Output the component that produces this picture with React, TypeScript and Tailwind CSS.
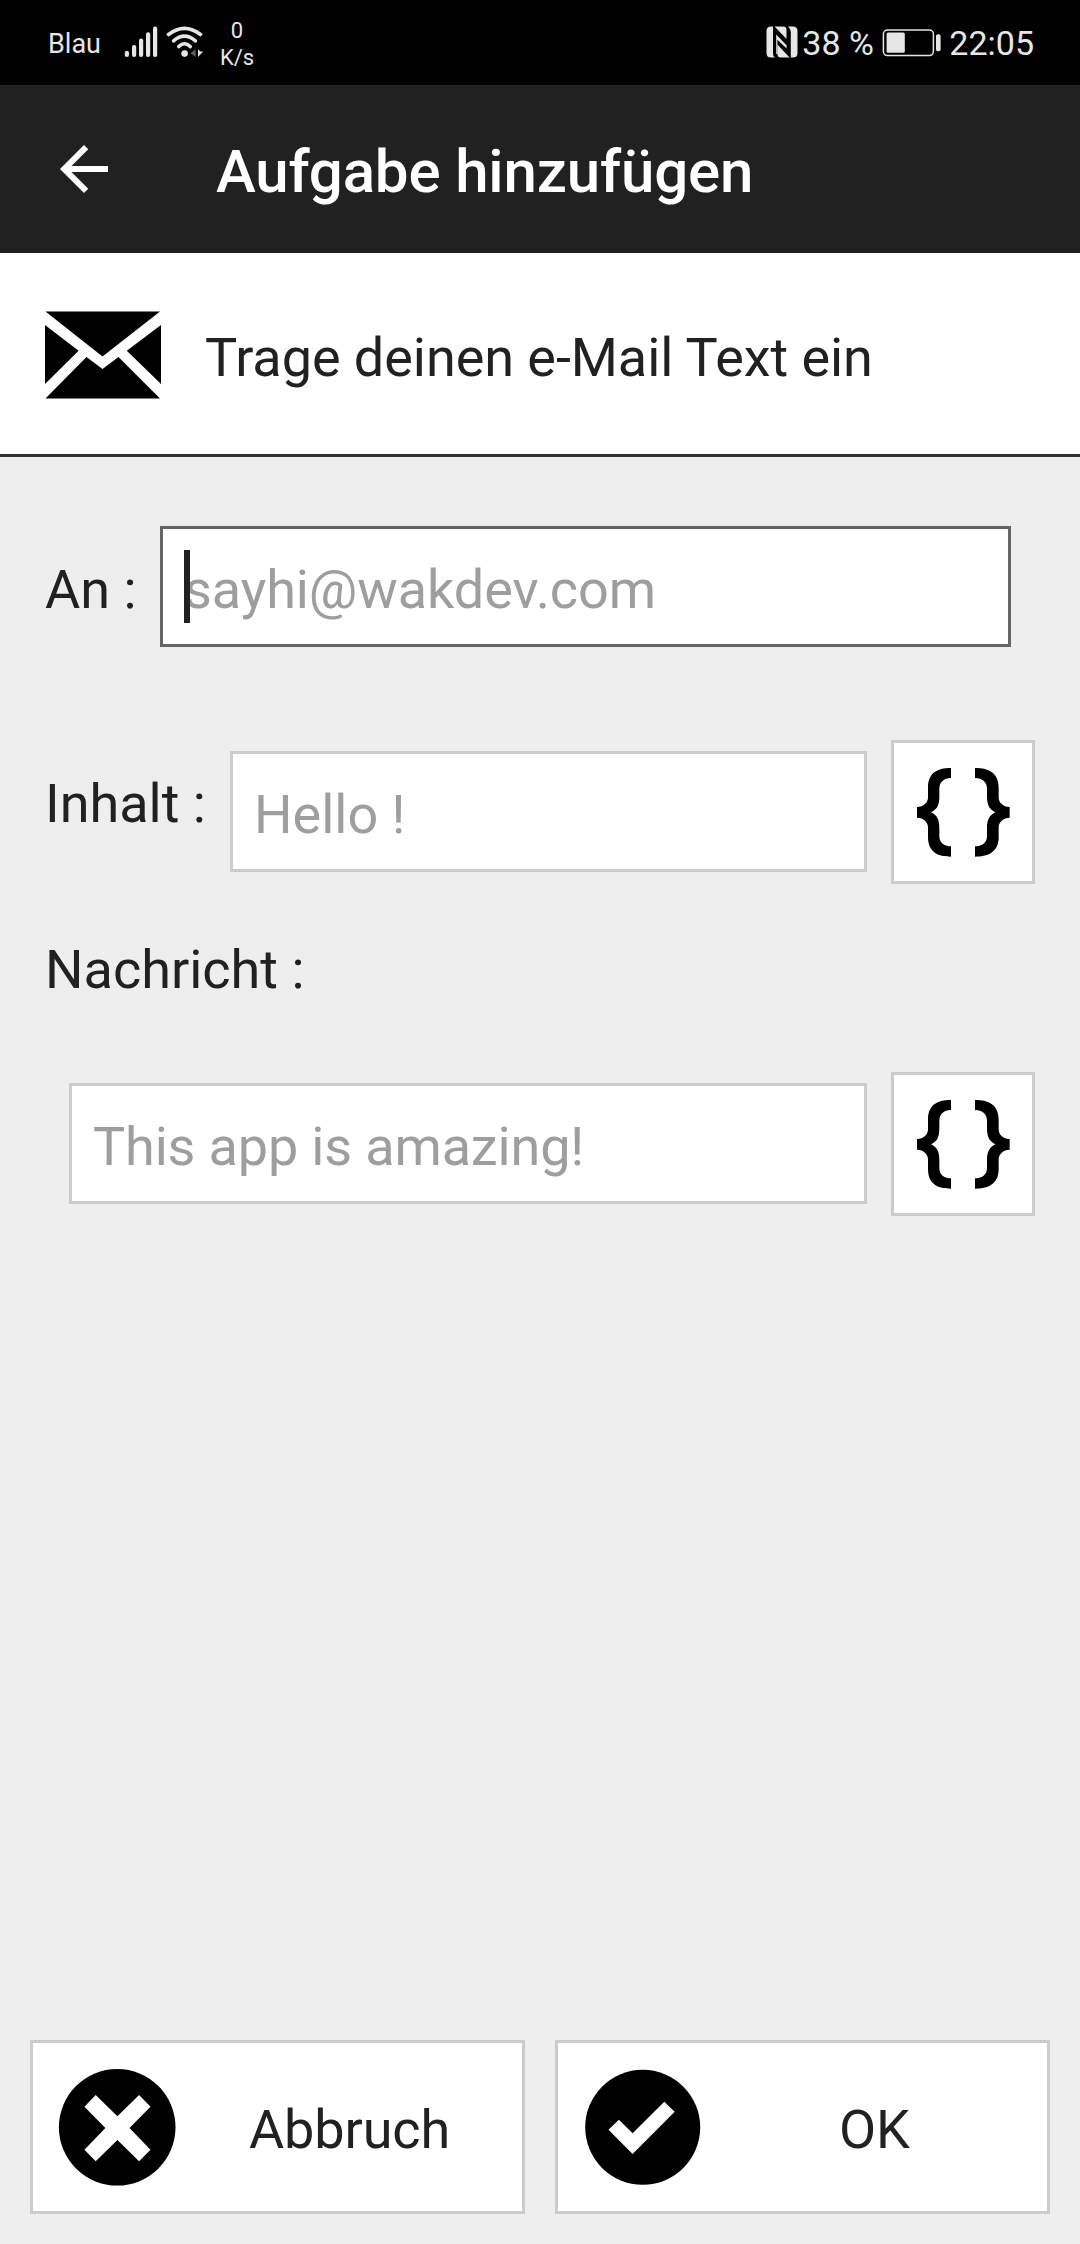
import React from "react";

function SignalIcon() {
  return (
    <svg className="block h-[32px] w-[34px] shrink-0" viewBox="0 0 34 32" fill="#e6e6e6">
      <rect x="0.8" y="24.8" width="4.2" height="6.2" rx="2.1" />
      <rect x="8" y="19" width="4.2" height="12" rx="2" />
      <rect x="15" y="12.6" width="4.2" height="18.4" rx="2" />
      <rect x="22" y="6.3" width="4.2" height="24.7" rx="2" />
      <rect x="29" y="0.5" width="4.2" height="30.5" rx="2" />
    </svg>
  );
}

function WifiIcon() {
  return (
    <svg className="block h-[32px] w-[38px] shrink-0" viewBox="0 0 38 32" fill="none">
      <g stroke="#e6e6e6" strokeWidth="3.6" strokeLinecap="round">
        <path d="M2.5 8.5 Q18.5 -3.8 34.5 8.5" />
        <path d="M7.6 14.8 Q18.5 5.4 29.4 14.8" />
        <path d="M12.8 20.6 Q18.5 14.8 24.2 20.6" />
      </g>
      <circle cx="18.6" cy="27.6" r="3.3" fill="#e6e6e6" />
      <path d="M29.6 23 V31 L24.4 27.2 Z" fill="#5a5a5a" />
      <path d="M32 23 L34.2 25.4 H37.2 L32 31 Z" fill="#e6e6e6" />
    </svg>
  );
}

function NfcIcon() {
  return (
    <svg className="block h-[32px] w-[32px] shrink-0" viewBox="0 0 32 32" fill="#e6e6e6">
      <path d="M5 0.5 H7 V28 Q7 30 9 31.5 H5 Q0.5 31.5 0.5 27 V5 Q0.5 0.5 5 0.5 Z" />
      <path d="M22 0.5 H27 Q31.5 0.5 31.5 5 V27 Q31.5 31.5 27 31.5 H24.8 V6 Q24.8 3 22 0.5 Z" />
      <path d="M8.5 0.5 H17.5 Q20.5 0.5 20.5 4 V13 Z" />
      <path d="M11.4 18.5 L23.6 31.5 H15 Q11.4 31.5 11.4 28 Z" />
      <path d="M10.2 8.6 L20.6 19.2 V22.4 L11.4 13.8 V28 H10.2 Z" />
    </svg>
  );
}

function BatteryIcon() {
  return (
    <svg className="block h-[28px] w-[59px] shrink-0" viewBox="0 0 59 28">
      <rect x="1.4" y="1" width="50" height="25.6" rx="4" fill="none" stroke="#e6e6e6" strokeWidth="1.5" />
      <rect x="4.6" y="3.6" width="18.2" height="20.2" rx="1.5" fill="#e6e6e6" />
      <rect x="54" y="5.3" width="4.6" height="17" rx="1.8" fill="#e6e6e6" />
    </svg>
  );
}

function BackIcon() {
  return (
    <svg className="block h-[72px] w-[72px] shrink-0" viewBox="0 0 24 24" fill="#fff">
      <path d="M20 11H7.83l5.59-5.59L12 4l-8 8 8 8 1.41-1.41L7.83 13H20v-2z" />
    </svg>
  );
}

function MailIcon() {
  return (
    <svg className="block h-[88px] w-[116px] shrink-0" viewBox="0 0 116 88">
      <path d="M0.5 0.5 H115 L57.5 45.5 Z" />
      <path d="M0 14 L33.6 39.8 L0 73 Z" />
      <path d="M116 14 L81.8 39.8 L116 73 Z" />
      <path d="M0.5 87.5 L41.5 46 L57.5 58 L73.5 46 L115 87.5 Z" />
    </svg>
  );
}

function BracesIcon() {
  return (
    <svg className="block h-[89px] w-[93px]" viewBox="0 0 279 267">
      <path d="M102 0 C58 0 33 17 33 59 V88 C33 104 20 117 0 117 V149 C20 149 33 163 33 178 V207 C33 249 58 266 102 266 V235 C80 235 67 223 67 204 V181 C67 157 62 142 42 133 C62 124 67 109 67 85 V62 C67 43 80 30 102 30 Z" />
      <path d="M174 0 C218 0 245 17 245 59 V88 C245 104 258 117 278 117 V149 C258 149 245 163 245 178 V207 C245 249 218 266 174 266 V235 C197 235 210 223 210 204 V181 C210 157 216 142 235 133 C216 124 210 109 210 85 V62 C210 43 197 30 174 30 Z" />
    </svg>
  );
}

function CancelIcon() {
  return (
    <svg className="block h-[118px] w-[118px] shrink-0" viewBox="0 0 118 118">
      <circle cx="59.2" cy="59.3" r="58.3" />
      <path
        fill="#fff"
        d="M37.7 27 L59.4 48.3 L81.1 27 L92.5 38.7 L71.5 60 L92.5 81.7 L81.1 93.3 L59.4 72 L37.7 93.3 L26.4 81.7 L47.4 60 L26.4 38.7 Z"
      />
    </svg>
  );
}

function CheckIcon() {
  return (
    <svg className="block h-[118px] w-[118px] shrink-0" viewBox="0 0 118 118">
      <circle cx="59.7" cy="59.3" r="57.5" />
      <path fill="#fff" d="M25.5 61.7 L35.9 51.7 L49.6 65.3 L81.3 33.7 L91.7 43.7 L49.6 86 Z" />
    </svg>
  );
}

function VariableButton() {
  return (
    <button
      aria-label="Variable"
      className="flex h-[144px] w-[144px] shrink-0 items-start border-[3px] border-[#ccc] bg-white pl-[23px] pt-[25px]"
    >
      <BracesIcon />
    </button>
  );
}

export default function App() {
  return (
    <div className="flex h-[2244px] w-[1080px] flex-col overflow-hidden whitespace-nowrap bg-[#eee] font-['Roboto',sans-serif] text-[54px] leading-[64px] text-[#212121]">
      <div className="flex h-[85px] shrink-0 items-start bg-black text-[#e6e6e6]">
        <span className="ml-[48px] mt-[28px] w-[76px] text-[27px] leading-8">Blau</span>
        <div className="mt-[26px]"><SignalIcon /></div>
        <div className="ml-[8px] mt-[26px]"><WifiIcon /></div>
        <div className="ml-[15px] mt-[17px] flex w-[36px] flex-col items-center text-[22px] leading-[27px]">
          <span>0</span>
          <span>K/s</span>
        </div>
        <div className="ml-auto mt-[26px]"><NfcIcon /></div>
        <span className="ml-[4px] mt-[23px] w-[80px] text-[34px] leading-10">38 %</span>
        <div className="mt-[29px]"><BatteryIcon /></div>
        <span className="ml-[8px] mr-[46px] mt-[23px] text-[34px] leading-10">22:05</span>
      </div>

      <header className="flex h-[168px] shrink-0 items-start bg-[#212121] pl-[48px] text-white">
        <div className="mt-[48px]"><BackIcon /></div>
        <h1 className="ml-[96px] mt-[51px] text-[60px] font-medium leading-[72px] tracking-[-0.16px]">Aufgabe hinzufügen</h1>
      </header>

      <section className="flex h-[204px] shrink-0 items-start border-b-[3px] border-[#333] bg-white pl-[45px]">
        <div className="mt-[58px]"><MailIcon /></div>
        <p className="ml-[44px] mt-[73px] tracking-[-0.06px]">Trage deinen e-Mail Text ein</p>
      </section>

      <main className="flex flex-1 flex-col">
        <div className="mt-[69px] flex h-[121px] items-start pl-[45px]">
          <label className="mt-[32px] w-[115px]">An :</label>
          <div className="relative h-[121px] w-[851px] border-[3px] border-[#666] bg-white pl-[21px] pt-[29px] tracking-[-0.08px] text-[#9e9e9e]">
            sayhi@wakdev.com
            <span className="absolute left-[21px] top-[21px] h-[73px] w-[6px] bg-[#212121]" />
          </div>
        </div>

        <div className="mt-[93px] flex h-[144px] items-start pl-[45px]">
          <label className="mt-[32px] w-[185px]">Inhalt :</label>
          <div className="mr-[24px] mt-[11px] h-[121px] w-[637px] border-[3px] border-[#ccc] bg-white pl-[21px] pt-[29px] text-[#9e9e9e]">
            Hello !
          </div>
          <VariableButton />
        </div>

        <label className="mt-[54px] pl-[45px]">Nachricht :</label>

        <div className="mt-[70px] flex h-[144px] items-start pl-[69px]">
          <div className="mr-[24px] mt-[11px] h-[121px] w-[798px] border-[3px] border-[#ccc] bg-white pl-[21px] pt-[29px] tracking-[-0.16px] text-[#9e9e9e]">
            This app is amazing!
          </div>
          <VariableButton />
        </div>
      </main>

      <footer className="mb-[30px] flex h-[174px] shrink-0 gap-[30px] px-[30px]">
        <button className="flex h-full w-[495px] items-start border-[3px] border-[#ccc] bg-white pl-[25px] pt-[25px]">
          <CancelIcon />
          <span className="mt-[30px] flex-1 pl-[1px] text-center tracking-[-0.1px]">Abbruch</span>
        </button>
        <button className="flex h-full w-[495px] items-start border-[3px] border-[#ccc] bg-white pl-[25px] pt-[25px]">
          <CheckIcon />
          <span className="mt-[30px] flex-1 pl-[1px] text-center">OK</span>
        </button>
      </footer>
    </div>
  );
}
